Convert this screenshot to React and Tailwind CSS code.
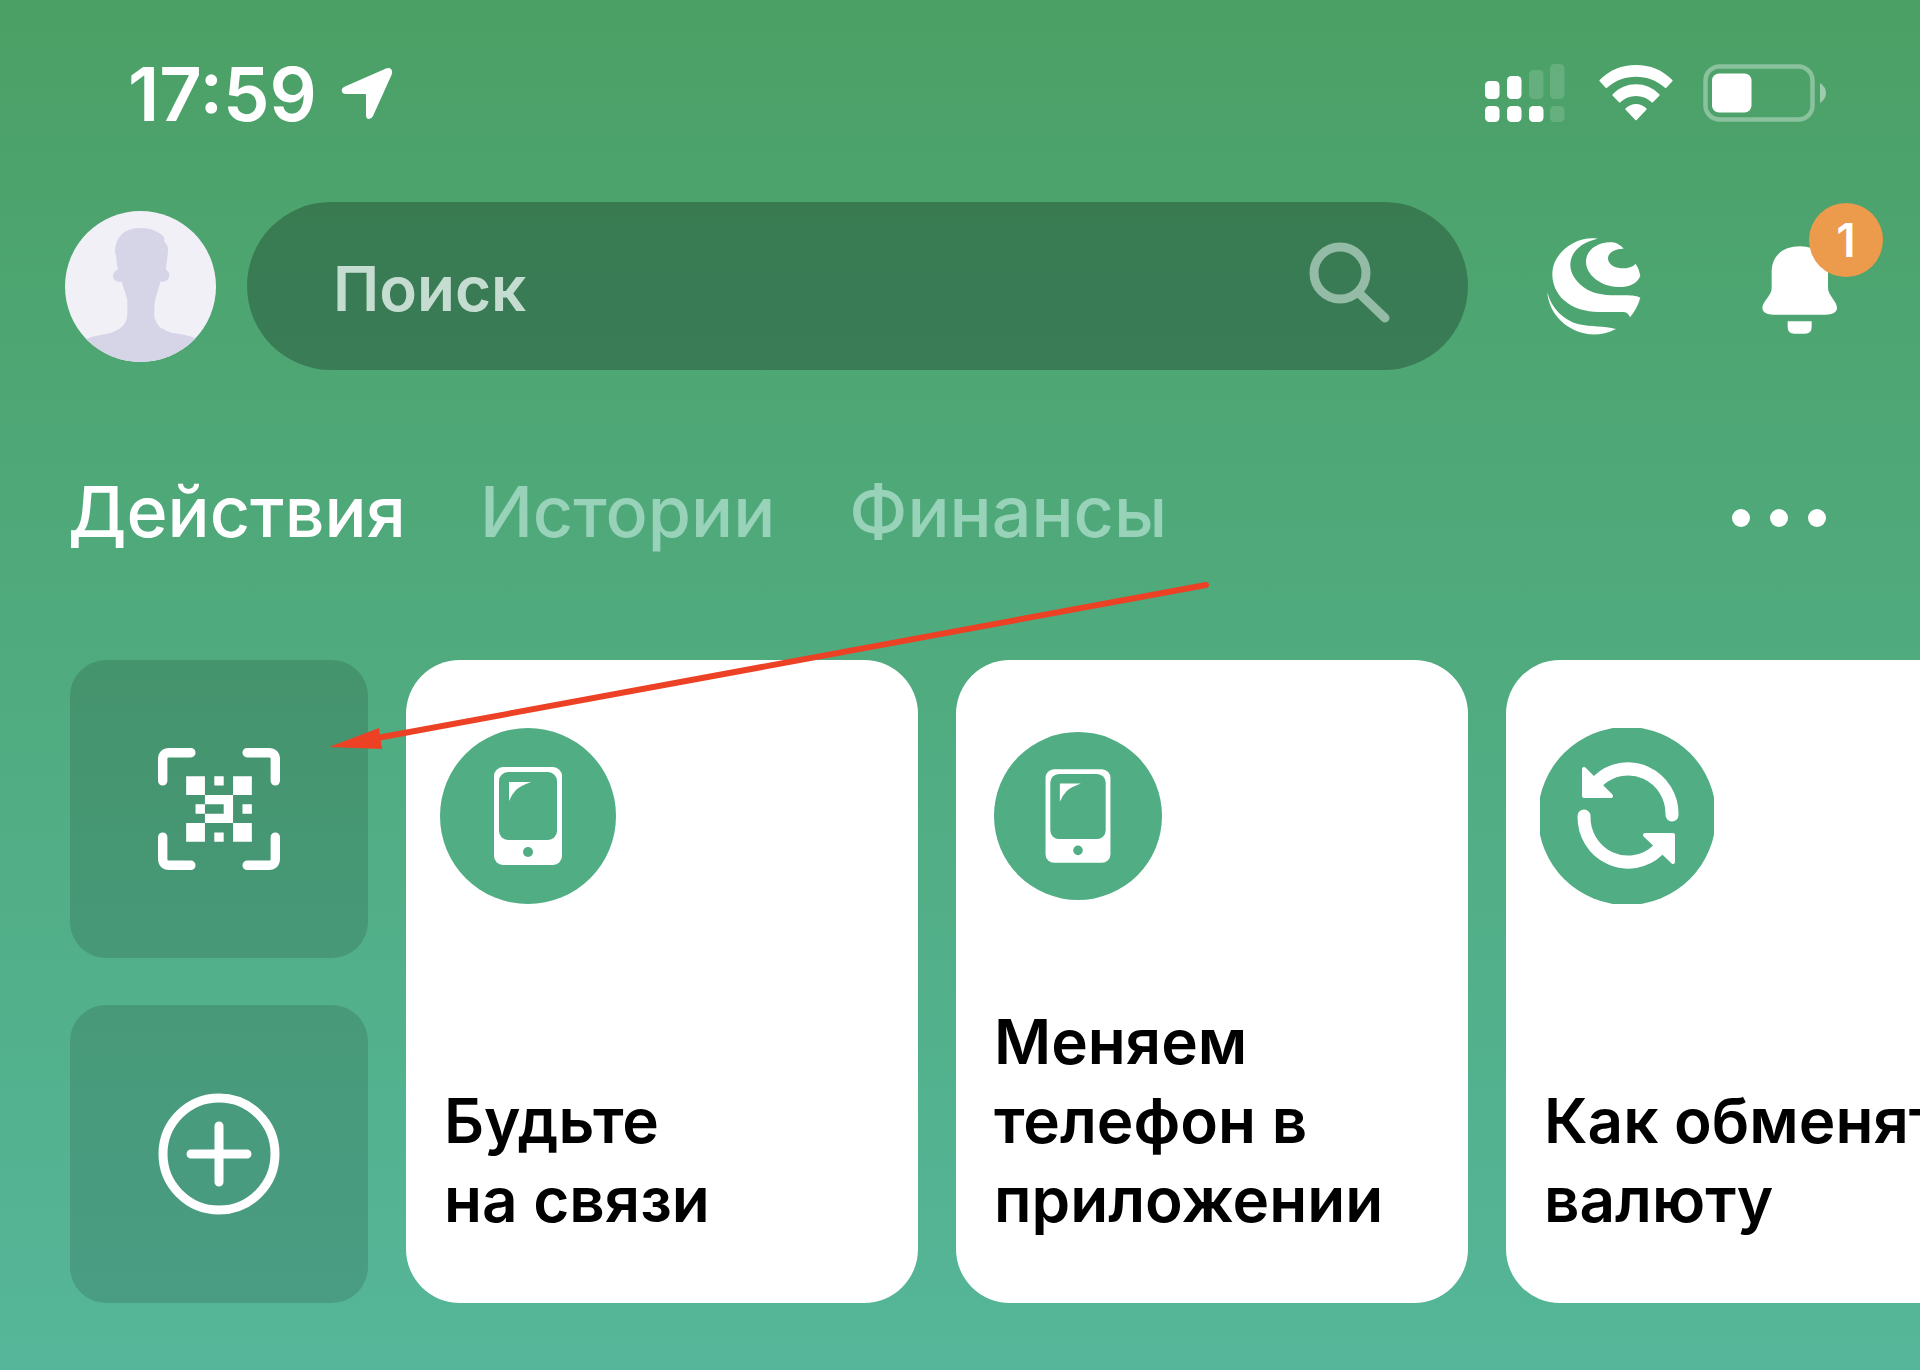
import React from "react";

function LocationIcon() {
  return (
    <svg className="h-[54px] w-[52px]" viewBox="0 0 52 54" fill="white" aria-hidden="true">
      <path d="M45 1.500Q50 0 51 4Q51.500 6 50.500 8L32 49Q30.500 52 28 52Q25 52 25 48V28Q25 27 24 27H5Q1 27 .7 23.500Q.7 21 4 19.500Z" />
    </svg>
  );
}

function SignalIcon() {
  return (
    <svg className="h-[58px] w-[80px]" viewBox="0 0 80 58" fill="white" aria-hidden="true">
      <rect x="0" y="17" width="14.500" height="18" rx="4.500" />
      <rect x="22" y="12" width="14.500" height="23" rx="4.500" />
      <rect x="44" y="6" width="14.500" height="29" rx="4.500" opacity=".15" />
      <rect x="65" y="0" width="14.500" height="35" rx="4.500" opacity=".15" />
      <rect x="0" y="42" width="14.500" height="16" rx="4.500" />
      <rect x="22" y="42" width="14.500" height="16" rx="4.500" />
      <rect x="44" y="42" width="14.500" height="16" rx="4.500" />
      <rect x="65" y="42" width="14.500" height="16" rx="4.500" opacity=".15" />
    </svg>
  );
}

function WifiIcon() {
  return (
    <svg className="h-[58px] w-[74px]" viewBox="0 0 222 174" fill="white" aria-hidden="true">
      <path d="M2 52Q0 50 2 48C32 18 68 3 111 3S190 18 220 48Q222 50 220 52L202 71Q200 73 198 71C173 49 144 38 111 38S49 49 24 71Q22 73 20 71Z" />
      <path d="M41 95Q39 93 41 91C61 71 84 61 111 61S161 71 181 91Q183 93 181 95L162 115Q160 117 158 115C144 102 129 96 111 96S78 102 64 115Q62 117 60 115Z" />
      <path d="M80 137Q78 135 80 133C89 125 99 120 111 120S133 125 142 133Q144 135 142 137L113 168Q111 170 109 168Z" />
    </svg>
  );
}

function BatteryIcon() {
  return (
    <svg className="h-[58px] w-[124px]" viewBox="0 0 124 58" aria-hidden="true">
      <rect x="2.500" y="2.500" width="107" height="53" rx="14" fill="none" stroke="white" strokeOpacity=".35" strokeWidth="4.500" />
      <rect x="9" y="9.500" width="39.500" height="39" rx="7" fill="white" />
      <path d="M117 19Q123 23 123 29T117 39Z" fill="white" fillOpacity=".45" />
    </svg>
  );
}

function Avatar() {
  return (
    <svg className="size-[151px]" viewBox="0 0 453 453" aria-hidden="true">
      <defs>
        <clipPath id="avatar-clip">
          <circle cx="226.500" cy="226.500" r="226.500" />
        </clipPath>
      </defs>
      <g clipPath="url(#avatar-clip)">
        <rect width="453" height="453" fill="#f1f0f7" />
        <path
          fill="#d6d5e8"
          d="M226 51C256 50 286 63 298 79V93C306 98 309 106 309 116C309 136 304 152 303 173V177C309 179 313 186 313 193C313 204 304 212 294 212H286C280 240 268 262 268 292V316C272 334 280 344 288 351C300 355 308 364 324 366C350 369 372 374 393 382V453H60V385C90 372 120 372 145 363C166 355 176 344 181 334Q187 322 187 308V268C183 246 175 234 171 212H162C151 211 144 203 144 194C144 185 150 180 159 175C156 158 154 150 154 140C152 124 149 126 150 116C153 98 155 90 163 79C176 59 200 51 226 51Z"
        />
      </g>
    </svg>
  );
}

function SearchIcon() {
  return (
    <svg className="h-[88px] w-[84px]" viewBox="0 0 84 88" fill="none" stroke="#94bba6" aria-hidden="true">
      <circle cx="32" cy="31" r="26" strokeWidth="9" />
      <path d="M52 52L77 76" strokeWidth="9" strokeLinecap="round" />
    </svg>
  );
}

function BankLogo() {
  return (
    <svg className="size-[125px]" viewBox="0 -3 375 375" fill="white" aria-hidden="true">
      <path d="M203 41C150 33 94 66 74 112C58 152 70 196 102 226C132 252 166 260 206 261L282 261Q294 262 300 277Q322 250 331 218C316 210 290 211 260 211C216 211 186 205 160 186C134 166 121 142 121 120C121 82 152 52 203 41Z" />
      <path d="M240 52Q252 51 260 55Q272 61 281 71C258 70 234 82 234 100C234 118 254 130 276 130C294 130 308 126 317 116Q328 132 331 152C322 178 292 187 264 186C210 184 168 148 168 110C168 76 200 53 240 52Z" />
      <path d="M52 202C64 250 100 286 146 298C182 306 222 303 258 312C232 326 204 330 178 328C110 320 56 266 52 202Z" />
    </svg>
  );
}

function BellIcon() {
  return (
    <svg className="size-[150px]" viewBox="0 47 450 450" fill="white" aria-hidden="true">
      <path d="M150 153C188 153 234 176 234 230V278C234 300 262 320 261 338C260 352 246 358 228 358H70C52 358 38 352 37 338C37 318 65 302 65 278V230C65 180 100 153 150 153Z" />
      <path d="M113 378H185V394Q185 415 165 415H133Q113 415 113 394Z" />
    </svg>
  );
}

function QrIcon() {
  return (
    <svg className="size-[122px]" viewBox="0 0 13 13" fill="white" aria-hidden="true">
      <g fill="none" stroke="white" strokeLinecap="round">
        <path d="M.5 3.500V1.200Q.5 .5 1.200 .5H3.500M9.500 .5H11.800Q12.500 .5 12.500 1.200V3.500M12.500 9.500V11.800Q12.500 12.500 11.800 12.500H9.500M3.500 12.500H1.200Q.5 12.500 .5 11.800V9.500" />
      </g>
      <path d="M3 3h2v2h-2zM6 3h1v1h-1zM8 3h2v2h-2zM4 6h1v1h-1zM9 6h1v1h-1zM3 8h2v2h-2zM8 8h2v2h-2zM6 9h1v1h-1zM5 5h3v3h-3v-1h2v-1h-2z" />
    </svg>
  );
}

function PlusIcon() {
  return (
    <svg className="size-[122px]" viewBox="0 0 122 122" fill="none" stroke="white" aria-hidden="true">
      <circle cx="61" cy="61" r="56" strokeWidth="9" />
      <path d="M61 33V89M33 61H89" strokeWidth="9" strokeLinecap="round" />
    </svg>
  );
}

function PhoneIcon({ className }) {
  return (
    <svg className={className} viewBox="0 0 176 176" aria-hidden="true">
      <circle cx="88" cy="88" r="88" fill="#50ad84" />
      <rect x="54" y="39" width="68" height="98" rx="9" fill="white" />
      <rect x="59" y="44" width="58" height="68" rx="9" fill="#50ad84" />
      <circle cx="88" cy="124" r="5" fill="#50ad84" />
      <path d="M69 54H91Q80 58 76 62Q72 66 69 73Z" fill="white" />
    </svg>
  );
}

function ExchangeIcon() {
  return (
    <svg className="size-[176px]" viewBox="0 0 176 176" aria-hidden="true">
      <defs>
        <clipPath id="exchange-clip">
          <rect width="174" height="177" />
        </clipPath>
      </defs>
      <circle cx="87" cy="88" r="89" fill="#50ad84" clipPath="url(#exchange-clip)" />
      <g fill="none" stroke="white" strokeWidth="13" strokeLinecap="round">
        <path d="M132 87A44 45 0 0 0 58 53" />
        <path d="M44 88A44 45 0 0 0 118 122" />
      </g>
      <g fill="white" stroke="white" strokeWidth="4" strokeLinejoin="round">
        <path d="M44 41L71 68H44Z" />
        <path d="M133 134L105 107H133Z" />
      </g>
    </svg>
  );
}

function PointerArrow() {
  return (
    <svg className="pointer-events-none absolute left-[329px] top-[580px] h-[172px] w-[885px]" viewBox="0 0 885 172" aria-hidden="true">
      <path d="M877 5L48 158" fill="none" stroke="#ec4125" strokeWidth="6" strokeLinecap="round" />
      <path d="M0 167L50 148L53 169Z" fill="#ec4125" />
    </svg>
  );
}

const tabs = ["Действия", "Истории", "Финансы"];

const cards = [
  { title: "Будьте\nна связи", icon: <PhoneIcon className="size-[176px]" /> },
  { title: "Меняем\nтелефон в\nприложении", icon: <PhoneIcon className="size-[168px]" /> },
  { title: "Как обменять\nвалюту", icon: <ExchangeIcon /> },
];

export default function App() {
  return (
    <div className="relative min-h-screen overflow-hidden bg-linear-to-b from-[#4ba065] to-[#55b699] pb-[67px] font-['Inter',sans-serif] text-white">
      <div className="flex h-[130px] items-end justify-between pr-[93px] pl-[128px]">
        <div className="flex items-center gap-6">
          <time className="text-[74px] leading-[72px] font-semibold">17:59</time>
          <LocationIcon />
        </div>
        <div className="flex h-[74px] items-center gap-[34px]">
          <SignalIcon />
          <WifiIcon />
          <span className="-ml-1">
            <BatteryIcon />
          </span>
        </div>
      </div>

      <header className="mt-[72px] flex items-center pr-5 pl-[65px]">
        <button type="button" aria-label="Профиль" className="shrink-0">
          <Avatar />
        </button>
        <label className="ml-[31px] flex h-[168px] min-w-0 flex-1 items-center rounded-full bg-black/25 pr-[76px] pl-[86px]">
          <input
            type="text"
            placeholder="Поиск"
            aria-label="Поиск"
            className="h-20 min-w-0 flex-1 bg-transparent pt-1 text-[62px] font-semibold text-white outline-none placeholder:text-[#c5dcd0]"
          />
          <SearchIcon />
        </label>
        <button type="button" aria-label="Банк" className="ml-[62px] shrink-0">
          <BankLogo />
        </button>
        <button type="button" aria-label="Уведомления" className="relative ml-[95px] shrink-0">
          <BellIcon />
          <span className="absolute -top-2 left-[59px] flex size-[74px] items-center justify-center rounded-full bg-[#ec9a4b] text-[46px] leading-none font-semibold">
            1
          </span>
        </button>
      </header>

      <nav className="mt-[106px] flex items-center pr-[94px] pl-[68px]">
        <div className="flex gap-[74px]">
          {tabs.map((tab, i) => (
            <button
              key={tab}
              type="button"
              className={
                i === 0
                  ? "text-[70px] leading-[72px] font-medium"
                  : "text-[70px] leading-[72px] font-medium text-[#97d2b9]"
              }
            >
              {tab}
            </button>
          ))}
        </div>
        <button type="button" aria-label="Ещё" className="mt-3 ml-auto flex gap-5">
          <span className="size-[18px] rounded-full bg-white" />
          <span className="size-[18px] rounded-full bg-white" />
          <span className="size-[18px] rounded-full bg-white" />
        </button>
      </nav>

      <main className="mt-[112px] flex gap-[38px] pl-[70px]">
        <div className="flex shrink-0 flex-col gap-[47px]">
          <button type="button" aria-label="Сканировать QR" className="flex size-[298px] items-center justify-center rounded-[36px] bg-black/13">
            <QrIcon />
          </button>
          <button type="button" aria-label="Добавить" className="flex size-[298px] items-center justify-center rounded-[36px] bg-black/13">
            <PlusIcon />
          </button>
        </div>
        {cards.map((card) => (
          <a
            key={card.title}
            href="#"
            className="flex w-[512px] shrink-0 flex-col justify-between rounded-[54px] bg-white px-[34px] pt-[68px] pb-16 text-black"
          >
            <span className="flex size-[176px] items-center justify-center">{card.icon}</span>
            <span className="pl-1 text-[62px] leading-[79px] font-semibold whitespace-pre">{card.title}</span>
          </a>
        ))}
      </main>

      <PointerArrow />
    </div>
  );
}
